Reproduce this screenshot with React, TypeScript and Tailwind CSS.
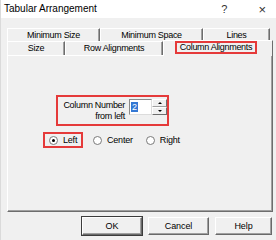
import React from "react";

const font = { fontFamily: '"Liberation Sans", Arial, sans-serif' };

function Tab({ w, label, last }: { w: string; label: string; last?: boolean }) {
  return (
    <div
      className={`${w} h-full flex items-center justify-center border-t border-l border-white ${
        last ? "" : "border-r border-r-[#6d6d6d]"
      } bg-[#f0f0f0] shadow-[inset_-1px_0_0_#a0a0a0]`}
    >
      <span className="text-[9px] tracking-[-0.3px] text-black leading-none">{label}</span>
    </div>
  );
}

function Radio({ label, checked }: { label: string; checked?: boolean }) {
  return (
    <div className="flex items-center gap-[5px]">
      <span className="w-[9px] h-[9px] rounded-full border border-[#7a7a7a] bg-white flex items-center justify-center">
        {checked && <span className="w-[3px] h-[3px] rounded-full bg-black" />}
      </span>
      <span className="text-[9px] tracking-[-0.2px] leading-none">{label}</span>
    </div>
  );
}

function Btn({ w, label, def }: { w: string; label: string; def?: boolean }) {
  return (
    <div
      className={`${w} h-[18px] flex items-center justify-center bg-[#f0f0f0] border border-t-white border-l-white border-r-[#696969] border-b-[#696969] ${
        def ? "outline outline-1 outline-[#3c3c3c]" : ""
      } shadow-[inset_-1px_-1px_0_#a0a0a0]`}
    >
      <span className="text-[9px] tracking-[-0.1px] leading-none">{label}</span>
    </div>
  );
}

export default function App() {
  return (
    <div style={font} className="w-[276px] h-[240px] bg-[#f0f0f0] flex flex-col text-black border-l border-[#dadada] overflow-hidden">
      <div className="h-[18px] bg-white flex items-center pl-[3px] pr-[10px] shrink-0">
        <span className="text-[10px] leading-none">Tabular Arrangement</span>
        <span className="ml-auto mr-[31px] text-[11px] text-[#333] leading-none">?</span>
        <span className="text-[13px] text-[#333] leading-none font-light">×</span>
      </div>

      <div className="pl-[6px] pr-[3px] pt-[10px] flex flex-col">
        <div className="h-[13px] flex">
          <Tab w="w-[93px]" label="Minimum Size" />
          <Tab w="w-[103px]" label="Minimum Space" />
          <Tab w="w-[67px]" label="Lines" />
        </div>
        <div className="h-[14px] flex items-end">
          <Tab w="w-[58px]" label="Size" />
          <Tab w="w-[98px]" label="Row Alignments" />
          <div className="w-[110px] h-[16px] -mb-[1px] relative z-10 flex items-start pl-[11px] pt-[0px] bg-[#f0f0f0] border-t border-l border-white border-r border-r-[#6d6d6d]">
            <div className="w-[82px] h-[13px] border-2 border-[#e53a3a] flex items-center justify-center">
              <span className="text-[9px] tracking-[-0.3px] leading-none">Column Alignments</span>
            </div>
          </div>
        </div>

        <div className="h-[157px] border-t border-l border-white border-r border-r-[#6d6d6d] border-b border-b-[#6d6d6d] shadow-[inset_-1px_-1px_0_#a0a0a0] flex flex-col pt-[39px]">
          <div className="ml-[48px] w-[113px] h-[31px] border-2 border-[#e53a3a] flex items-center pl-[3px]">
            <div className="w-[65px] flex flex-col items-end text-[9px] tracking-[-0.3px] leading-[11px]">
              <span>Column Number</span>
              <span>from left</span>
            </div>
            <div className="ml-[4px] -mt-[7px] flex h-[16px]">
              <div className="w-[23px] h-full bg-white border border-t-[#8a8a8a] border-l-[#8a8a8a] border-r-[#dcdcdc] border-b-[#dcdcdc] flex items-center pl-[1px]">
                <span className="bg-[#3478d4] text-white text-[9px] leading-[10px] px-[1px]">2</span>
              </div>
              <div className="w-[15px] h-full flex flex-col">
                <div className="h-1/2 border border-t-white border-l-white border-r-[#6d6d6d] border-b-[#a0a0a0] flex items-center justify-center">
                  <span className="w-0 h-0 border-l-[2px] border-r-[2px] border-b-[2px] border-l-transparent border-r-transparent border-b-black" />
                </div>
                <div className="h-1/2 border border-t-white border-l-white border-r-[#6d6d6d] border-b-[#6d6d6d] flex items-center justify-center">
                  <span className="w-0 h-0 border-l-[2px] border-r-[2px] border-t-[2px] border-l-transparent border-r-transparent border-t-black" />
                </div>
              </div>
            </div>
          </div>

          <div className="ml-[35px] mt-[6px] flex items-center">
            <div className="w-[40px] h-[16px] border-2 border-[#e53a3a] flex items-center pl-[4px]">
              <Radio label="Left" checked />
            </div>
            <div className="ml-[10px]">
              <Radio label="Center" />
            </div>
            <div className="ml-[13px]">
              <Radio label="Right" />
            </div>
          </div>
        </div>

        <div className="flex justify-end gap-[6px] mt-[5px] pr-[1px]">
          <Btn w="w-[60px]" label="OK" def />
          <Btn w="w-[61px]" label="Cancel" />
          <Btn w="w-[57px]" label="Help" />
        </div>
      </div>
    </div>
  );
}
